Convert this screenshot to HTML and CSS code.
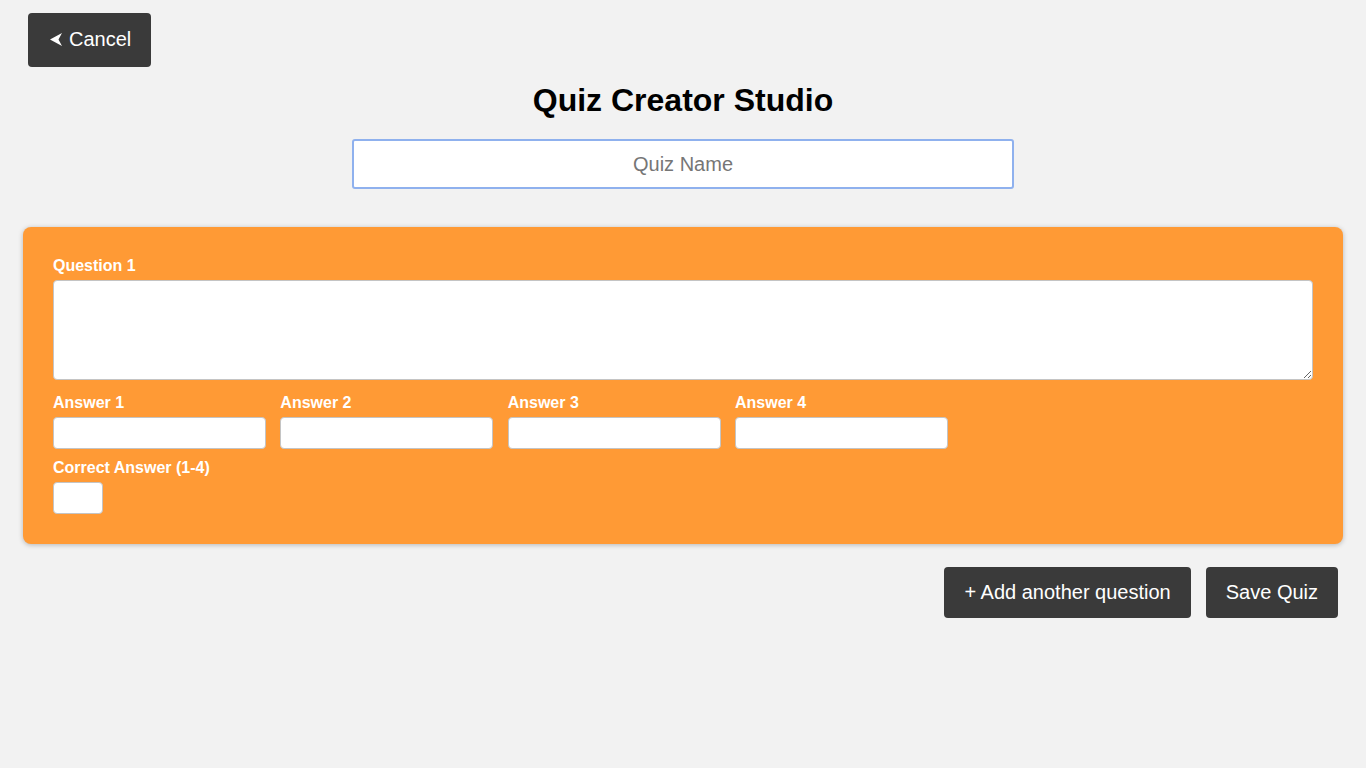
FILE: index.html
```html
<!DOCTYPE html>
<html lang="en">
<head>
<meta charset="utf-8">
<title>Quiz Creator Studio</title>
<link rel="stylesheet" href="styles.css">
</head>
<body>
<div class="page">
  <div class="top">
    <button class="btn btn-cancel" type="button">
      <svg class="back-icon" width="12" height="13" viewBox="0 0 12 13" aria-hidden="true"><path d="M12 0 L0 6.5 L12 13 L8.5 6.5 Z" fill="#fff"/></svg>
      Cancel
    </button>
  </div>
  <h1 class="title">Quiz Creator Studio</h1>
  <div class="name-row">
    <input class="quiz-name" type="text" placeholder="Quiz Name">
  </div>
  <section class="card">
    <label class="label">Question 1</label>
    <textarea class="question"></textarea>
    <div class="answers">
      <div class="answer">
        <label class="label">Answer 1</label>
        <input class="field" type="text">
      </div>
      <div class="answer">
        <label class="label">Answer 2</label>
        <input class="field" type="text">
      </div>
      <div class="answer">
        <label class="label">Answer 3</label>
        <input class="field" type="text">
      </div>
      <div class="answer">
        <label class="label">Answer 4</label>
        <input class="field" type="text">
      </div>
    </div>
    <label class="label">Correct Answer (1-4)</label>
    <input class="field field-small" type="text">
  </section>
  <div class="actions">
    <button class="btn" type="button">+ Add another question</button>
    <button class="btn" type="button">Save Quiz</button>
  </div>
</div>
</body>
</html>
```

FILE: styles.css
```css
html, body {
  margin: 0;
  padding: 0;
  background: #f2f2f2;
  font-family: "Liberation Sans", Arial, sans-serif;
}

.page {
  padding: 0 23px;
}

.top {
  padding-top: 13px;
  padding-left: 5px;
}

.btn {
  background: #3a3a3a;
  color: #fff;
  border: none;
  border-radius: 4px;
  font-family: "Liberation Sans", Arial, sans-serif;
  font-size: 20px;
  line-height: 23px;
  padding: 14px 20px;
  cursor: pointer;
}

.btn-cancel {
  display: flex;
  align-items: center;
  gap: 7px;
  height: 54px;
  padding: 0 20px 2px 22px;
}

.back-icon {
  display: block;
}

.title {
  text-align: center;
  font-size: 32px;
  font-weight: bold;
  color: #000;
  margin: 15px 0 0;
  line-height: 37px;
}

.name-row {
  display: flex;
  justify-content: center;
  margin-top: 20px;
}

.quiz-name {
  box-sizing: border-box;
  width: 662px;
  height: 50px;
  border: 2px solid #8fb1ee;
  border-radius: 3px;
  background: #fff;
  text-align: center;
  font-family: "Liberation Sans", Arial, sans-serif;
  font-size: 20px;
  color: #333;
  outline: none;
  padding: 0 10px;
}

.quiz-name::placeholder {
  color: #767676;
}

.card {
  margin-top: 38px;
  background: #ff9a35;
  border-radius: 8px;
  box-shadow: 0 1px 5px rgba(0, 0, 0, 0.25);
  padding: 30px 30px 30px;
  display: flex;
  flex-direction: column;
  align-items: flex-start;
}

.label {
  display: block;
  color: #fff;
  font-weight: bold;
  font-size: 16px;
  line-height: 18px;
  margin-bottom: 5px;
}

.question {
  box-sizing: border-box;
  width: 100%;
  height: 100px;
  border: 1px solid #c4c4c4;
  border-radius: 4px;
  background: #fff;
  margin: 0 0 14px;
  font-family: "Liberation Sans", Arial, sans-serif;
  font-size: 16px;
}

.answers {
  display: flex;
  gap: 14.33px;
  margin-bottom: 10px;
}

.answer {
  display: flex;
  flex-direction: column;
}

.field {
  box-sizing: border-box;
  width: 213px;
  height: 32px;
  border: 1px solid #c4c4c4;
  border-radius: 4px;
  background: #fff;
  margin: 0;
  font-family: "Liberation Sans", Arial, sans-serif;
  font-size: 16px;
}

.field-small {
  width: 50px;
}

.actions {
  display: flex;
  justify-content: flex-end;
  gap: 15px;
  margin-top: 23px;
  padding-right: 5px;
}

.actions .btn {
  height: 51px;
}
```
